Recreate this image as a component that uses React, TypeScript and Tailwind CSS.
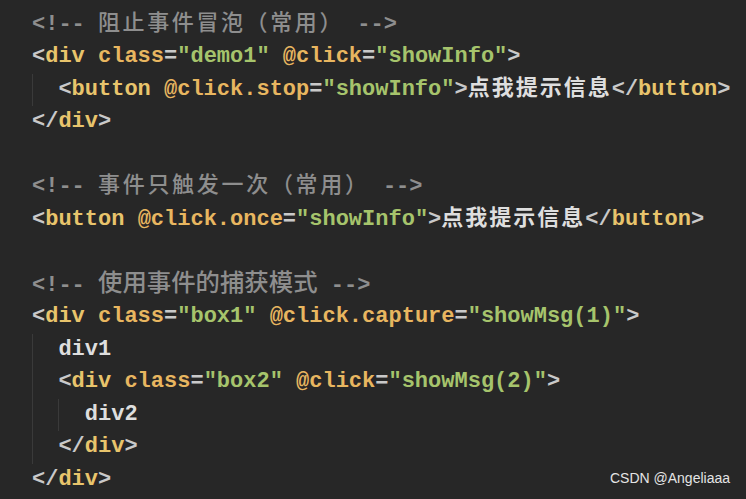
import type { ReactNode } from 'react'

const P = ({ children }: { children: ReactNode }) => <span className="text-[#c9c9c9]">{children}</span>
const Tag = ({ children }: { children: ReactNode }) => <span className="text-[#e8c46c]">{children}</span>
const Attr = ({ children }: { children: ReactNode }) => <span className="text-[#e8b660]">{children}</span>
const Str = ({ children }: { children: ReactNode }) => <span className="text-[#a6c46c]">{children}</span>
const Cjk = ({ children, className }: { children: ReactNode; className?: string }) => (
    <span className={`font-['Noto_Sans_CJK_SC',sans-serif] leading-none ${className ?? ''}`}>{children}</span>
)

const Line = ({ children }: { children?: ReactNode }) => (
    <div className="h-[32.5px] whitespace-pre">{children}</div>
)

// indented block with a faint indent guide on its left edge
const Indent = ({ children }: { children: ReactNode }) => (
    <div className="border-l border-[#3a3a3a] pl-[25.4px]">{children}</div>
)

const App = () => {
    return (
        <div className="relative h-[499px] w-[746px] overflow-hidden bg-[#272727]">
            <div className="pl-[32px] pt-[8.5px] font-['Liberation_Mono',monospace] text-[22px] font-bold leading-[32.5px]">
                {/* 阻止冒泡 */}
                <Line>
                    <span className="text-[#8e8e8e]">
                        {'<!-- '}
                        <Cjk className="font-medium tracking-[2.6px]">阻止事件冒泡（常用）</Cjk>
                        {' -->'}
                    </span>
                </Line>
                <Line>
                    <P>&lt;</P><Tag>div</Tag> <Attr>class</Attr><P>=</P><Str>"demo1"</Str> <Attr>@click</Attr><P>=</P><Str>"showInfo"</Str><P>&gt;</P>
                </Line>
                <Indent>
                    <Line>
                        <P>&lt;</P><Tag>button</Tag> <Attr>@click.stop</Attr><P>=</P><Str>"showInfo"</Str><P>&gt;</P>
                        <Cjk className="text-[#dedede] tracking-[2px]">点我提示信息</Cjk>
                        <P>&lt;/</P><Tag>button</Tag><P>&gt;</P>
                    </Line>
                </Indent>
                <Line>
                    <P>&lt;/</P><Tag>div</Tag><P>&gt;</P>
                </Line>
                <Line />

                {/* 只触发一次 */}
                <Line>
                    <span className="text-[#8e8e8e]">
                        {'<!-- '}
                        <Cjk className="font-medium tracking-[2.7px]">事件只触发一次（常用）</Cjk>
                        {' -->'}
                    </span>
                </Line>
                <Line>
                    <P>&lt;</P><Tag>button</Tag> <Attr>@click.once</Attr><P>=</P><Str>"showInfo"</Str><P>&gt;</P>
                    <Cjk className="text-[#dedede] tracking-[2px]">点我提示信息</Cjk>
                    <P>&lt;/</P><Tag>button</Tag><P>&gt;</P>
                </Line>
                <Line />

                {/* 捕获模式 */}
                <Line>
                    <span className="text-[#8e8e8e]">
                        {'<!-- '}
                        <Cjk className="text-[24.4px] font-medium tracking-normal">使用事件的捕获模式</Cjk>
                        {' -->'}
                    </span>
                </Line>
                <Line>
                    <P>&lt;</P><Tag>div</Tag> <Attr>class</Attr><P>=</P><Str>"box1"</Str> <Attr>@click.capture</Attr><P>=</P><Str>"showMsg(1)"</Str><P>&gt;</P>
                </Line>
                <Indent>
                    <Line>
                        <span className="text-[#dedede]">div1</span>
                    </Line>
                    <Line>
                        <P>&lt;</P><Tag>div</Tag> <Attr>class</Attr><P>=</P><Str>"box2"</Str> <Attr>@click</Attr><P>=</P><Str>"showMsg(2)"</Str><P>&gt;</P>
                    </Line>
                    <Indent>
                        <Line>
                            <span className="text-[#dedede]">div2</span>
                        </Line>
                    </Indent>
                    <Line>
                        <P>&lt;/</P><Tag>div</Tag><P>&gt;</P>
                    </Line>
                </Indent>
                <Line>
                    <P>&lt;/</P><Tag>div</Tag><P>&gt;</P>
                </Line>
            </div>

            {/* watermark */}
            <div className="absolute bottom-[12px] right-[16px] font-['Liberation_Sans',sans-serif] text-[14px] leading-[18px] text-[#e4e4e4]">
                CSDN @Angeliaaa
            </div>
        </div>
    )
}

export default App
